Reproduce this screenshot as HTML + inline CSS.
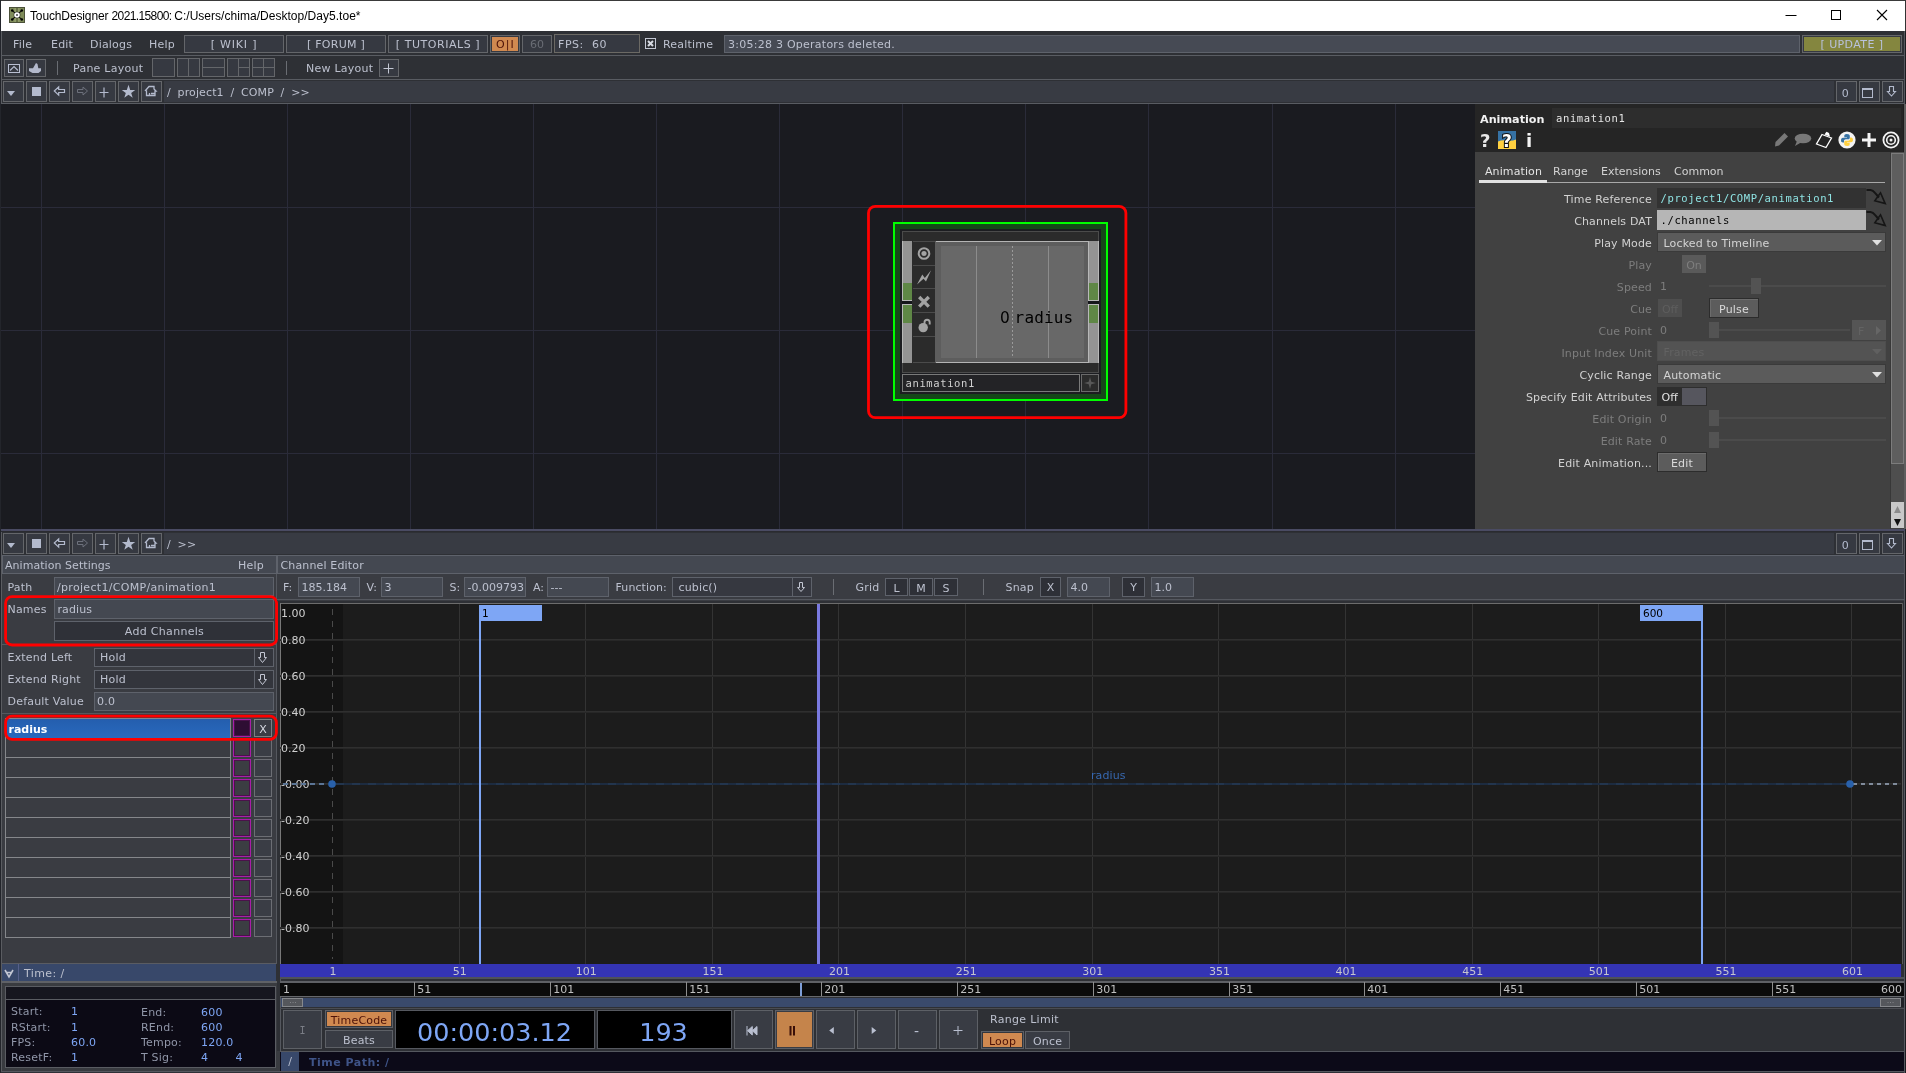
<!DOCTYPE html>
<html><head><meta charset="utf-8"><title>TouchDesigner</title>
<style>
html,body{margin:0;padding:0;background:#2e3035;overflow:hidden;}
#root{will-change:transform;position:relative;width:1906px;height:1073px;overflow:hidden;background:#2e3035;font-family:'DejaVu Sans',sans-serif;}
#root div{position:absolute;}
#root svg{position:absolute;overflow:visible;}
.t{white-space:nowrap;line-height:normal;}
</style></head><body><div id="root">
<div style="left:0px;top:0px;width:1906px;height:31px;background:#ffffff;"></div>
<div style="left:0px;top:0px;width:1906px;height:1px;background:#3a3a3a;"></div>
<div style="left:0px;top:0px;width:1px;height:1073px;background:#23252b;"></div>
<div style="left:1905px;top:0px;width:1px;height:31px;background:#333333;"></div>
<svg style="left:9px;top:7px" width="16" height="16" viewBox="0 0 16 16">
<rect x="0.5" y="0.5" width="15" height="15" fill="#7e8b59" stroke="#4b5139" stroke-width="1"/>
<rect x="5.3" y="1" width="1.8" height="14" fill="#8f9c69"/><rect x="8.9" y="1" width="1.800" height="14" fill="#8f9c69"/>
<rect x="7.4" y="1" width="1.2" height="14" fill="#56613d"/>
<path d="M3.2 3.400 L12.800 12.600 M12.800 3.400 L3.200 12.600" stroke="#0c0d08" stroke-width="1.100"/>
<circle cx="3.200" cy="3.400" r="1.250" fill="#000"/><circle cx="12.800" cy="3.400" r="1.250" fill="#000"/>
<circle cx="3.200" cy="12.600" r="1.250" fill="#000"/><circle cx="12.800" cy="12.600" r="1.250" fill="#000"/>
<circle cx="8" cy="8" r="3.300" fill="#1a1c12"/><circle cx="8" cy="8" r="2.800" fill="#fff"/><rect x="7.200" y="7.200" width="1.600" height="1.600" fill="#2a2a2a"/>
</svg>
<div class="t" style="top:9.14px;font-size:12px;color:#000;font-family:'Liberation Sans', sans-serif;left:30px;"><span style="letter-spacing:-0.13px">TouchDesigner </span><span style="letter-spacing:-0.62px">2021.15800: </span><span style="letter-spacing:0.03px">C:/Users/chima/Desktop/Day5.toe*</span></div>
<svg style="left:1780px;top:5px" width="120" height="22" viewBox="0 0 120 22">
<path d="M5.5 10.5 H16.5" stroke="#000" stroke-width="1" fill="none"/>
<rect x="51.5" y="5.5" width="9" height="9" stroke="#000" stroke-width="1" fill="none"/>
<path d="M97 5 L107 15 M107 5 L97 15" stroke="#000" stroke-width="1.1" fill="none"/>
</svg>
<div style="left:1px;top:31px;width:1905px;height:25px;background:#2e3035;"></div>
<div style="left:1px;top:31px;width:1px;height:73px;background:#5a5c61;"></div>
<div style="left:1px;top:529px;width:1px;height:544px;background:#5a5c61;"></div>
<div style="left:1px;top:55px;width:1905px;height:1px;background:#595c62;"></div>
<div class="t" style="top:37.79px;font-size:11px;color:#bcc0ce;font-family:'DejaVu Sans', sans-serif;left:13px;letter-spacing:0.2px;">File</div>
<div class="t" style="top:37.79px;font-size:11px;color:#bcc0ce;font-family:'DejaVu Sans', sans-serif;left:51px;letter-spacing:0.2px;">Edit</div>
<div class="t" style="top:37.79px;font-size:11px;color:#bcc0ce;font-family:'DejaVu Sans', sans-serif;left:90px;letter-spacing:0.2px;">Dialogs</div>
<div class="t" style="top:37.79px;font-size:11px;color:#bcc0ce;font-family:'DejaVu Sans', sans-serif;left:149px;letter-spacing:0.2px;">Help</div>
<div style="left:184px;top:35px;width:100px;height:18px;background:#363941;border:1px solid #64666a;box-sizing:border-box;"></div>
<div class="t" style="top:37.79px;font-size:11px;color:#bcc0ce;font-family:'DejaVu Sans', sans-serif;left:34.0px;width:400px;text-align:center;letter-spacing:0.8px;">[ WIKI ]</div>
<div style="left:286px;top:35px;width:100px;height:18px;background:#363941;border:1px solid #64666a;box-sizing:border-box;"></div>
<div class="t" style="top:37.79px;font-size:11px;color:#bcc0ce;font-family:'DejaVu Sans', sans-serif;left:136.0px;width:400px;text-align:center;letter-spacing:0.25px;">[ FORUM ]</div>
<div style="left:388px;top:35px;width:100px;height:18px;background:#363941;border:1px solid #64666a;box-sizing:border-box;"></div>
<div class="t" style="top:37.79px;font-size:11px;color:#bcc0ce;font-family:'DejaVu Sans', sans-serif;left:238.0px;width:400px;text-align:center;letter-spacing:0.55px;">[ TUTORIALS ]</div>
<div style="left:490px;top:35px;width:30px;height:18px;background:#363941;border:1px solid #64666a;box-sizing:border-box;"></div>
<div style="left:492px;top:37px;width:26px;height:14px;background:#d08950;"></div>
<div class="t" style="top:37.79px;font-size:11px;color:#4d1208;font-family:'DejaVu Sans', sans-serif;left:305.5px;width:400px;text-align:center;letter-spacing:1.1px;">O|I</div>
<div style="left:522px;top:35px;width:30px;height:18px;background:#363941;border:1px solid #64666a;box-sizing:border-box;"></div>
<div class="t" style="top:37.79px;font-size:11px;color:#6a6d75;font-family:'DejaVu Sans', sans-serif;left:337px;width:400px;text-align:center;">60</div>
<div style="left:554px;top:34px;width:86px;height:19px;background:#363941;border:1px solid #6b6964;box-sizing:border-box;"></div>
<div class="t" style="top:37.79px;font-size:11px;color:#bcc0ce;font-family:'DejaVu Sans', sans-serif;left:558px;letter-spacing:0.55px;">FPS:&nbsp; 60</div>
<div style="left:645px;top:38px;width:11px;height:11px;border:1px solid #c3c7d3;box-sizing:border-box;"></div>
<svg style="left:645px;top:38px" width="11" height="11"><path d="M3 3 L8 8 M8 3 L3 8" stroke="#d8dbe3" stroke-width="2" fill="none"/></svg>
<div class="t" style="top:37.79px;font-size:11px;color:#bcc0ce;font-family:'DejaVu Sans', sans-serif;left:663px;letter-spacing:0.2px;">Realtime</div>
<div style="left:724px;top:35px;width:1076px;height:18px;background:#464a54;border:1px solid #5e626b;box-sizing:border-box;"></div>
<div class="t" style="top:37.79px;font-size:11px;color:#bcc0ce;font-family:'DejaVu Sans', sans-serif;left:728px;letter-spacing:0.25px;">3:05:28 3 Operators deleted.</div>
<div style="left:1802px;top:35px;width:100px;height:18px;background:#363941;border:1px solid #64666a;box-sizing:border-box;"></div>
<div style="left:1804px;top:37px;width:96px;height:14px;background:#84863f;"></div>
<div class="t" style="top:37.79px;font-size:11px;color:#b9c2dc;font-family:'DejaVu Sans', sans-serif;left:1652px;width:400px;text-align:center;letter-spacing:0.4px;">[ UPDATE ]</div>
<div style="left:1px;top:79px;width:1905px;height:1px;background:#595c62;"></div>
<div style="left:4px;top:59px;width:20px;height:18px;background:#363941;border:1px solid #64666a;box-sizing:border-box;"></div>
<div style="left:26px;top:59px;width:20px;height:18px;background:#363941;border:1px solid #64666a;box-sizing:border-box;"></div>
<svg style="left:4px;top:59px" width="20" height="18"><rect x="4.5" y="5.5" width="11" height="8" fill="none" stroke="#b9bfd2"/><path d="M6 11.500 L10 7.500 L14 11.500" fill="none" stroke="#b9bfd2" stroke-width="1.100"/></svg>
<svg style="left:26px;top:59px" width="20" height="18"><path d="M3 9.300 H15 V12 L12.500 14 H6.500 L3 12 Z M7 9.300 L10 4 L11.500 5 L12.300 9.300 Z" fill="#b3b9cc"/></svg>
<div style="left:57px;top:61px;width:1px;height:14px;background:#6a6d73;"></div>
<div class="t" style="top:61.79px;font-size:11px;color:#bcc0ce;font-family:'DejaVu Sans', sans-serif;left:73px;letter-spacing:0.25px;">Pane Layout</div>
<div style="left:152px;top:58px;width:23px;height:19px;background:#363941;border:1px solid #64666a;box-sizing:border-box;"></div>
<div style="left:177px;top:58px;width:23px;height:19px;background:#363941;border:1px solid #64666a;box-sizing:border-box;"></div>
<div style="left:188px;top:58px;width:1px;height:19px;background:#64666a;"></div>
<div style="left:202px;top:58px;width:23px;height:19px;background:#363941;border:1px solid #64666a;box-sizing:border-box;"></div>
<div style="left:202px;top:67px;width:23px;height:1px;background:#64666a;"></div>
<div style="left:227px;top:58px;width:23px;height:19px;background:#363941;border:1px solid #64666a;box-sizing:border-box;"></div>
<div style="left:238px;top:58px;width:1px;height:19px;background:#64666a;"></div>
<div style="left:238px;top:67px;width:12px;height:1px;background:#64666a;"></div>
<div style="left:252px;top:58px;width:23px;height:19px;background:#363941;border:1px solid #64666a;box-sizing:border-box;"></div>
<div style="left:263px;top:58px;width:1px;height:19px;background:#64666a;"></div>
<div style="left:252px;top:67px;width:23px;height:1px;background:#64666a;"></div>
<div style="left:286px;top:61px;width:1px;height:14px;background:#6a6d73;"></div>
<div class="t" style="top:61.79px;font-size:11px;color:#bcc0ce;font-family:'DejaVu Sans', sans-serif;left:306px;letter-spacing:0.25px;">New Layout</div>
<div style="left:379px;top:59px;width:20px;height:18px;background:#363941;border:1px solid #64666a;box-sizing:border-box;"></div>
<svg style="left:379px;top:59px" width="20" height="18"><path d="M4.5 9.5 H14.5 M9.5 4.5 V14.5" stroke="#c3c7d3" fill="none"/></svg>
<div style="left:2px;top:80px;width:1903px;height:23px;background:#2e3035;"></div>
<div style="left:164px;top:81px;width:1670px;height:21px;background:#383b43;"></div>
<div style="left:3px;top:81px;width:21px;height:21px;background:#363941;border:1px solid #64666a;box-sizing:border-box;"></div>
<svg style="left:3px;top:81px" width="21" height="21"><path d="M4 10 H12 L8 15 Z" fill="#b3bacd"/></svg>
<div style="left:26px;top:81px;width:21px;height:21px;background:#363941;border:1px solid #64666a;box-sizing:border-box;"></div>
<svg style="left:26px;top:81px" width="21" height="21"><rect x="6" y="6" width="9" height="9" fill="#b3bacd"/></svg>
<div style="left:49px;top:81px;width:21px;height:21px;background:#363941;border:1px solid #64666a;box-sizing:border-box;"></div>
<svg style="left:49px;top:81px" width="21" height="21"><path d="M5.300 10 L9.700 5.800 V8.500 H15.500 V11.500 H9.700 V14.200 Z" fill="none" stroke="#b3bacd" stroke-width="1.2"/></svg>
<div style="left:72px;top:81px;width:21px;height:21px;background:#363941;border:1px solid #64666a;box-sizing:border-box;"></div>
<svg style="left:72px;top:81px" width="21" height="21"><path d="M15.5 10 L11 6 V8.5 H5.5 V11.5 H11 V14 Z" fill="none" stroke="#6d717c" stroke-width="1"/></svg>
<div style="left:95px;top:81px;width:21px;height:21px;background:#363941;border:1px solid #64666a;box-sizing:border-box;"></div>
<svg style="left:95px;top:81px" width="21" height="21"><path d="M4.500 11.500 H13.500 M9 6.500 V16.500" stroke="#b3bacd" stroke-width="1.2" fill="none"/></svg>
<div style="left:118px;top:81px;width:21px;height:21px;background:#363941;border:1px solid #64666a;box-sizing:border-box;"></div>
<svg style="left:118px;top:81px" width="21" height="21"><path d="M10.500 3.800 L12.200 8.900 H17.200 L13.200 11.900 L14.700 16.800 L10.500 13.800 L6.300 16.800 L7.800 11.900 L3.800 8.900 H8.800 Z" fill="#b3bacd"/></svg>
<div style="left:141px;top:81px;width:21px;height:21px;background:#363941;border:1px solid #64666a;box-sizing:border-box;"></div>
<svg style="left:141px;top:81px" width="21" height="21"><path d="M4.500 9.500 L8 5.500 H13 V8 L15 10 H14 V14.500 H5.500 V10 Z M8.500 14.500 V12 M10 12.500 H14" fill="none" stroke="#b3bacd" stroke-width="1.300"/></svg>
<div class="t" style="top:85.79px;font-size:11px;color:#bcc0ce;font-family:'DejaVu Sans', sans-serif;left:167px;letter-spacing:0.12px;word-spacing:3.1px;">/ project1 / COMP / &gt;&gt;</div>
<div style="left:1834px;top:80px;width:70px;height:23px;background:#2e3035;"></div>
<div style="left:1836px;top:81px;width:21px;height:21px;background:#363941;border:1px solid #64666a;box-sizing:border-box;"></div>
<div style="left:1859px;top:81px;width:21px;height:21px;background:#363941;border:1px solid #64666a;box-sizing:border-box;"></div>
<div style="left:1882px;top:81px;width:21px;height:21px;background:#363941;border:1px solid #64666a;box-sizing:border-box;"></div>
<div class="t" style="top:86.79px;font-size:11px;color:#b3bacd;font-family:'DejaVu Sans', sans-serif;left:1645.2px;width:400px;text-align:center;">0</div>
<svg style="left:1857px;top:81px" width="21" height="21"><rect x="5.5" y="7.5" width="10" height="9" fill="none" stroke="#b3bacd"/><rect x="5" y="7" width="11" height="2" fill="#b3bacd"/></svg>
<svg style="left:1881px;top:81px" width="21" height="21"><path d="M8.500 5.500 H12.500 V10.500 H14.500 L10.500 15 L6.500 10.500 H8.500 Z" fill="none" stroke="#b3bacd" stroke-width="1.1"/></svg>
<div style="left:1px;top:103px;width:1905px;height:1px;background:#595c62;"></div>
<div style="left:1px;top:104px;width:1474px;height:425px;background:#1a1b20;"></div>
<div style="left:41px;top:104px;width:1px;height:425px;background:#2a2b39;"></div>
<div style="left:164px;top:104px;width:1px;height:425px;background:#2a2b39;"></div>
<div style="left:287px;top:104px;width:1px;height:425px;background:#2a2b39;"></div>
<div style="left:410px;top:104px;width:1px;height:425px;background:#2a2b39;"></div>
<div style="left:533px;top:104px;width:1px;height:425px;background:#2a2b39;"></div>
<div style="left:656px;top:104px;width:1px;height:425px;background:#2a2b39;"></div>
<div style="left:779px;top:104px;width:1px;height:425px;background:#2a2b39;"></div>
<div style="left:902px;top:104px;width:1px;height:425px;background:#2a2b39;"></div>
<div style="left:1025px;top:104px;width:1px;height:425px;background:#2a2b39;"></div>
<div style="left:1148px;top:104px;width:1px;height:425px;background:#2a2b39;"></div>
<div style="left:1272px;top:104px;width:1px;height:425px;background:#2a2b39;"></div>
<div style="left:1395px;top:104px;width:1px;height:425px;background:#2a2b39;"></div>
<div style="left:1px;top:207px;width:1474px;height:1px;background:#2a2b39;"></div>
<div style="left:1px;top:330px;width:1474px;height:1px;background:#2a2b39;"></div>
<div style="left:1px;top:453px;width:1474px;height:1px;background:#2a2b39;"></div>
<svg style="left:0px;top:0px" width="1" height="1"><rect x="868.50" y="206.30" width="257.40" height="211.40" rx="6.8" ry="6.8" fill="none" stroke="#ff0000" stroke-width="2.8"/></svg>
<div style="left:893px;top:222px;width:215px;height:179px;background:#154818;border:2px solid #00ff00;box-sizing:border-box;"></div>
<div style="left:900px;top:229px;width:201px;height:165px;background:#1c1d21;"></div>
<div style="left:902px;top:231px;width:197px;height:142px;background:#2b2b2b;"></div>
<div style="left:902px;top:231px;width:197px;height:1px;background:#4b4b4b;"></div>
<div style="left:902px;top:372px;width:197px;height:1px;background:#4b4b4b;"></div>
<div style="left:902px;top:241px;width:10px;height:122px;background:#949494;"></div>
<div style="left:902px;top:241px;width:1px;height:122px;background:#b8b8b8;"></div>
<div style="left:903px;top:283px;width:9px;height:17px;background:#5f8746;"></div>
<div style="left:902px;top:300px;width:10px;height:5px;background:#15161a;"></div>
<div style="left:902px;top:300px;width:10px;height:1px;background:#b8b8b8;"></div>
<div style="left:902px;top:304px;width:10px;height:1px;background:#b8b8b8;"></div>
<div style="left:903px;top:305px;width:9px;height:18px;background:#5f8746;"></div>
<div style="left:1088px;top:241px;width:11px;height:122px;background:#949494;"></div>
<div style="left:1088px;top:241px;width:1px;height:122px;background:#b8b8b8;"></div>
<div style="left:1098px;top:241px;width:1px;height:122px;background:#b8b8b8;"></div>
<div style="left:1089px;top:283px;width:9px;height:17px;background:#5f8746;"></div>
<div style="left:1088px;top:300px;width:11px;height:5px;background:#15161a;"></div>
<div style="left:1088px;top:300px;width:11px;height:1px;background:#b8b8b8;"></div>
<div style="left:1088px;top:304px;width:11px;height:1px;background:#b8b8b8;"></div>
<div style="left:1089px;top:305px;width:9px;height:18px;background:#5f8746;"></div>
<div style="left:913px;top:265px;width:22px;height:1px;background:#4b4b4b;"></div>
<div style="left:913px;top:288px;width:22px;height:1px;background:#4b4b4b;"></div>
<div style="left:913px;top:312px;width:22px;height:1px;background:#4b4b4b;"></div>
<div style="left:913px;top:336px;width:22px;height:1px;background:#4b4b4b;"></div>
<div style="left:913px;top:241px;width:22px;height:1px;background:#4b4b4b;"></div>
<div style="left:913px;top:362px;width:22px;height:1px;background:#4b4b4b;"></div>
<div style="left:902px;top:363px;width:1px;height:10px;background:#4b4b4b;"></div>
<div style="left:1098px;top:363px;width:1px;height:10px;background:#4b4b4b;"></div>
<div style="left:902px;top:231px;width:1px;height:10px;background:#4b4b4b;"></div>
<div style="left:1098px;top:231px;width:1px;height:10px;background:#4b4b4b;"></div>
<svg style="left:913px;top:242px" width="22" height="23"><circle cx="11" cy="11.500" r="5.3" fill="none" stroke="#a3a3a3" stroke-width="2"/><circle cx="11" cy="11.500" r="2.600" fill="#a3a3a3"/></svg>
<svg style="left:913px;top:266px" width="22" height="22"><path d="M4 18.600 L9.300 8.500 L11.800 11.900 L18.100 4.200 L13 15.600 L10.500 12.700 Z" fill="#a3a3a3"/></svg>
<svg style="left:913px;top:289px" width="22" height="23"><path d="M6.200 8 L15.800 17.600 M15.800 8 L6.200 17.600" stroke="#a3a3a3" stroke-width="3.300" fill="none"/></svg>
<svg style="left:913px;top:312px" width="22" height="24"><circle cx="10.200" cy="15.600" r="4.700" fill="#a3a3a3"/><path d="M11.500 12 V10.300 A2.600 2.600 0 0 1 16.700 10.300 V12.500" stroke="#a3a3a3" stroke-width="1.900" fill="none"/></svg>
<div style="left:935px;top:241px;width:153px;height:122px;background:#5d5d5d;"></div>
<div style="left:936px;top:241px;width:152px;height:1px;background:#b4b4b4;"></div>
<div style="left:936px;top:362px;width:152px;height:1px;background:#b4b4b4;"></div>
<div style="left:941px;top:246px;width:143px;height:112px;background:#686868;"></div>
<div style="left:976px;top:246px;width:1px;height:112px;background:#8c8c8c;"></div>
<div style="left:1048px;top:246px;width:1px;height:112px;background:#8c8c8c;"></div>
<div style="left:1012px;top:246px;width:1px;height:112px;background:repeating-linear-gradient(to bottom,#9a9a9a 0 2px,transparent 2px 4px);"></div>
<div class="t" style="top:308.15px;font-size:16px;color:#000;font-family:'DejaVu Sans', sans-serif;left:999.5px;transform:scaleX(0.96);transform-origin:0 0;">0</div>
<div class="t" style="top:308.15px;font-size:16px;color:#000;font-family:'DejaVu Sans Mono', monospace;left:1014.6px;letter-spacing:0.15px;">radius</div>
<div style="left:902px;top:374px;width:178px;height:18px;background:#232326;border:1px solid #7a7a7a;box-sizing:border-box;"></div>
<div class="t" style="top:377.26px;font-size:10.5px;color:#d0d0d0;font-family:'DejaVu Sans Mono', monospace;left:905.5px;letter-spacing:0.62px;">animation1</div>
<div style="left:1081px;top:374px;width:18px;height:18px;background:#2b2b2b;border:1px solid #6a6a6a;box-sizing:border-box;"></div>
<svg style="left:1081px;top:374px" width="18" height="18"><path d="M9 3 L10.300 7.700 L15 9 L10.300 10.300 L9 15 L7.700 10.300 L3 9 L7.700 7.700 Z" fill="#585858"/></svg>
<div style="left:1475px;top:104px;width:429px;height:425px;background:#414141;"></div>
<div style="left:1475px;top:104px;width:429px;height:48px;background:#252525;"></div>
<div style="left:1904px;top:104px;width:2px;height:425px;background:#1a1a1c;"></div>
<div class="t" style="top:112.61px;font-size:11.2px;color:#f2f2f2;font-family:'DejaVu Sans', sans-serif;left:1480px;font-weight:bold;">Animation</div>
<div style="left:1552px;top:108px;width:349px;height:20px;background:#2d2d2d;"></div>
<div class="t" style="top:112.26px;font-size:10.5px;color:#e6e6e6;font-family:'DejaVu Sans Mono', monospace;left:1556px;letter-spacing:0.62px;">animation1</div>
<div class="t" style="top:129.80px;font-size:18px;color:#e8e8e8;font-family:'DejaVu Sans', sans-serif;left:1480px;font-weight:bold;">?</div>
<svg style="left:1498px;top:131px" width="18" height="18" viewBox="0 0 18 18">
<rect width="18" height="18" fill="#3672a4"/><path d="M0 10.500 Q4 8.700 9 9.600 Q14 10.300 18 8.600 V18 H0 Z" fill="#ffd040"/></svg>
<svg style="left:1498px;top:131px" width="18" height="18"><text x="9" y="15.500" text-anchor="middle" font-family="DejaVu Sans, sans-serif" font-weight="bold" font-size="17" fill="#fff" stroke="#111" stroke-width="2" paint-order="stroke">?</text></svg>
<div class="t" style="top:129.80px;font-size:18px;color:#f4f4f4;font-family:'DejaVu Sans', sans-serif;left:1526px;font-weight:bold;">i</div>
<svg style="left:1772px;top:130px" width="20" height="20" viewBox="0 0 20 20">
<path d="M3 16.500 L3.500 12 L12.500 3 L16 6.500 L7 15.500 Z" fill="#787878"/></svg>
<svg style="left:1793px;top:131px" width="20" height="18" viewBox="0 0 20 18">
<ellipse cx="10" cy="7.500" rx="8.300" ry="4.800" fill="#787878"/><path d="M4 10 L2 15 L8 11.500 Z" fill="#787878"/></svg>
<svg style="left:1814px;top:130px" width="22" height="20" viewBox="0 0 22 20">
<path d="M8 4.500 L17.500 8 L12 17.500 L2.500 14 Z" fill="#252525" stroke="#fff" stroke-width="1.300"/>
<path d="M10.500 4.500 L12.500 1.800 L15 3 L16 6.800 Z" fill="#fff"/></svg>
<svg style="left:1838px;top:131px" width="18" height="18" viewBox="0 0 18 18">
<circle cx="9" cy="9" r="8.600" fill="#f3f3f3"/>
<path d="M8.800 3 C6.500 3 6.300 4 6.300 5 V6.300 H9 V6.800 H5 C3.600 6.800 3 8 3 9.300 C3 10.600 3.600 11.600 5 11.600 H6 V10 C6 9 6.800 8.300 7.800 8.300 H10.300 C11.200 8.300 11.800 7.600 11.800 6.800 V5 C11.800 3.800 10.800 3 8.800 3 Z" fill="#3672a4"/>
<path d="M9.200 15 C11.500 15 11.700 14 11.700 13 V11.700 H9 V11.200 H13 C14.400 11.200 15 10 15 8.700 C15 7.400 14.400 6.400 13 6.400 H12 V8 C12 9 11.200 9.700 10.200 9.700 H7.700 C6.800 9.700 6.200 10.400 6.200 11.200 V13 C6.200 14.200 7.200 15 9.200 15 Z" fill="#ffd040"/>
</svg>
<svg style="left:1862px;top:133px" width="14" height="14"><path d="M0 7 H14 M7 0 V14" stroke="#f4f4f4" stroke-width="3" fill="none"/></svg>
<svg style="left:1882px;top:131px" width="18" height="18"><circle cx="9" cy="9" r="7.600" fill="none" stroke="#f4f4f4" stroke-width="1.800"/><circle cx="9" cy="9" r="4.300" fill="none" stroke="#f4f4f4" stroke-width="1.600"/><circle cx="9" cy="9" r="1.500" fill="#f4f4f4"/></svg>
<div class="t" style="top:164.79px;font-size:11px;color:#e4e4e4;font-family:'DejaVu Sans', sans-serif;left:1485px;letter-spacing:0.1px;">Animation</div>
<div class="t" style="top:164.79px;font-size:11px;color:#d2d2d2;font-family:'DejaVu Sans', sans-serif;left:1553px;">Range</div>
<div class="t" style="top:164.79px;font-size:11px;color:#d2d2d2;font-family:'DejaVu Sans', sans-serif;left:1601px;">Extensions</div>
<div class="t" style="top:164.79px;font-size:11px;color:#d2d2d2;font-family:'DejaVu Sans', sans-serif;left:1674px;">Common</div>
<div style="left:1479px;top:182px;width:406px;height:1px;background:#a8a8a8;"></div>
<div style="left:1479px;top:180px;width:68px;height:3px;background:#e2e2e2;"></div>
<div style="left:1891px;top:152px;width:13px;height:350px;background:#4e4e4e;"></div>
<div style="left:1890px;top:152px;width:1px;height:377px;background:#383838;"></div>
<div style="left:1891px;top:153px;width:13px;height:311px;background:#5e5e5e;border:1px solid #7c7c7c;box-sizing:border-box;"></div>
<div style="left:1891px;top:502px;width:13px;height:26px;background:#c8c8c8;"></div>
<svg style="left:1891px;top:502px" width="13" height="26"><path d="M3 11 H10 L6.500 4 Z" fill="#8a8a8a"/><path d="M3 17 H10 L6.500 24 Z" fill="#111"/></svg>
<div class="t" style="top:192.79px;font-size:11px;color:#d2d2d2;font-family:'DejaVu Sans', sans-serif;left:1252px;width:400px;text-align:right;letter-spacing:0.15px;">Time Reference</div>
<div class="t" style="top:214.79px;font-size:11px;color:#d2d2d2;font-family:'DejaVu Sans', sans-serif;left:1252px;width:400px;text-align:right;letter-spacing:0.15px;">Channels DAT</div>
<div class="t" style="top:236.79px;font-size:11px;color:#d2d2d2;font-family:'DejaVu Sans', sans-serif;left:1252px;width:400px;text-align:right;letter-spacing:0.15px;">Play Mode</div>
<div class="t" style="top:258.79px;font-size:11px;color:#7d7d7d;font-family:'DejaVu Sans', sans-serif;left:1252px;width:400px;text-align:right;letter-spacing:0.15px;">Play</div>
<div class="t" style="top:280.79px;font-size:11px;color:#7d7d7d;font-family:'DejaVu Sans', sans-serif;left:1252px;width:400px;text-align:right;letter-spacing:0.15px;">Speed</div>
<div class="t" style="top:302.79px;font-size:11px;color:#7d7d7d;font-family:'DejaVu Sans', sans-serif;left:1252px;width:400px;text-align:right;letter-spacing:0.15px;">Cue</div>
<div class="t" style="top:324.79px;font-size:11px;color:#7d7d7d;font-family:'DejaVu Sans', sans-serif;left:1252px;width:400px;text-align:right;letter-spacing:0.15px;">Cue Point</div>
<div class="t" style="top:346.79px;font-size:11px;color:#7d7d7d;font-family:'DejaVu Sans', sans-serif;left:1252px;width:400px;text-align:right;letter-spacing:0.15px;">Input Index Unit</div>
<div class="t" style="top:368.79px;font-size:11px;color:#d2d2d2;font-family:'DejaVu Sans', sans-serif;left:1252px;width:400px;text-align:right;letter-spacing:0.15px;">Cyclic Range</div>
<div class="t" style="top:390.79px;font-size:11px;color:#d2d2d2;font-family:'DejaVu Sans', sans-serif;left:1252px;width:400px;text-align:right;letter-spacing:0.15px;">Specify Edit Attributes</div>
<div class="t" style="top:412.79px;font-size:11px;color:#7d7d7d;font-family:'DejaVu Sans', sans-serif;left:1252px;width:400px;text-align:right;letter-spacing:0.15px;">Edit Origin</div>
<div class="t" style="top:434.79px;font-size:11px;color:#7d7d7d;font-family:'DejaVu Sans', sans-serif;left:1252px;width:400px;text-align:right;letter-spacing:0.15px;">Edit Rate</div>
<div class="t" style="top:456.79px;font-size:11px;color:#d2d2d2;font-family:'DejaVu Sans', sans-serif;left:1252px;width:400px;text-align:right;letter-spacing:0.15px;">Edit Animation...</div>
<div style="left:1657px;top:188px;width:209px;height:20px;background:#323232;"></div>
<div class="t" style="top:192.26px;font-size:10.5px;color:#8fe3e3;font-family:'DejaVu Sans Mono', monospace;left:1660.5px;letter-spacing:0.62px;">/project1/COMP/animation1</div>
<div style="left:1657px;top:210px;width:209px;height:20px;background:#b6b6b6;"></div>
<div class="t" style="top:214.26px;font-size:10.5px;color:#000;font-family:'DejaVu Sans Mono', monospace;left:1660.5px;letter-spacing:0.62px;">./channels</div>
<svg style="left:1866px;top:188px" width="21" height="20"><path d="M0.500 2 H4.500 Q7 2.300 9 4.800 L13 9.500" fill="none" stroke="#161616" stroke-width="2"/><path d="M14.500 4.800 L19.200 15.600 L8.800 12.800 Z" fill="none" stroke="#161616" stroke-width="1.600"/></svg>
<svg style="left:1866px;top:210px" width="21" height="20"><path d="M0.500 2 H4.500 Q7 2.300 9 4.800 L13 9.500" fill="none" stroke="#161616" stroke-width="2"/><path d="M14.500 4.800 L19.200 15.600 L8.800 12.800 Z" fill="none" stroke="#161616" stroke-width="1.600"/></svg>
<div style="left:1657px;top:232px;width:229px;height:20px;background:#5b5b5b;border:1px solid #3a3a3a;box-sizing:border-box;"></div>
<div class="t" style="top:236.99px;font-size:11px;color:#d4d4d4;font-family:'DejaVu Sans', sans-serif;left:1663.5px;letter-spacing:0.15px;">Locked to Timeline</div>
<svg style="left:1872px;top:240px" width="10" height="6"><path d="M0 0 H10 L5 5.500 Z" fill="#e0e0e0"/></svg>
<div style="left:1682px;top:255px;width:24px;height:18px;background:#5a5a5a;"></div>
<div class="t" style="top:258.79px;font-size:11px;color:#7e7e7e;font-family:'DejaVu Sans', sans-serif;left:1494px;width:400px;text-align:center;">On</div>
<div class="t" style="top:279.79px;font-size:11px;color:#7d7d7d;font-family:'DejaVu Sans', sans-serif;left:1660px;">1</div>
<div style="left:1709px;top:285px;width:177px;height:2px;background:#4b4b4b;"></div>
<div style="left:1751px;top:278px;width:10px;height:16px;background:#535353;"></div>
<div style="left:1658px;top:299px;width:24px;height:18px;background:#4e4e4e;"></div>
<div class="t" style="top:302.79px;font-size:11px;color:#5e5e5e;font-family:'DejaVu Sans', sans-serif;left:1470px;width:400px;text-align:center;">Off</div>
<div style="left:1709px;top:298px;width:50px;height:20px;background:#5c5c5c;border:1px solid #2c2c2c;box-sizing:border-box;box-shadow:inset 1px 1px 0 #6c6c6c;"></div>
<div class="t" style="top:302.99px;font-size:11px;color:#dadada;font-family:'DejaVu Sans', sans-serif;left:1534px;width:400px;text-align:center;letter-spacing:0.2px;">Pulse</div>
<div class="t" style="top:323.79px;font-size:11px;color:#7d7d7d;font-family:'DejaVu Sans', sans-serif;left:1660px;">0</div>
<div style="left:1709px;top:329px;width:141px;height:2px;background:#4b4b4b;"></div>
<div style="left:1709px;top:322px;width:10px;height:16px;background:#535353;"></div>
<div style="left:1852px;top:320px;width:34px;height:20px;background:#555555;"></div>
<div class="t" style="top:324.59px;font-size:11px;color:#636363;font-family:'DejaVu Sans', sans-serif;left:1858px;">F</div>
<svg style="left:1876px;top:326px" width="6" height="10"><path d="M0 0 V9 L5 4.500 Z" fill="#666"/></svg>
<div style="left:1657px;top:341px;width:229px;height:20px;background:#535353;border:1px solid #4e4e4e;box-sizing:border-box;"></div>
<div class="t" style="top:345.99px;font-size:11px;color:#626262;font-family:'DejaVu Sans', sans-serif;left:1663.5px;letter-spacing:0.15px;">Frames</div>
<svg style="left:1872px;top:349px" width="10" height="6"><path d="M0 0 H10 L5 5.500 Z" fill="#606060"/></svg>
<div style="left:1657px;top:364px;width:229px;height:20px;background:#5b5b5b;border:1px solid #3a3a3a;box-sizing:border-box;"></div>
<div class="t" style="top:368.99px;font-size:11px;color:#d4d4d4;font-family:'DejaVu Sans', sans-serif;left:1663.5px;letter-spacing:0.15px;">Automatic</div>
<svg style="left:1872px;top:372px" width="10" height="6"><path d="M0 0 H10 L5 5.500 Z" fill="#e0e0e0"/></svg>
<div style="left:1657px;top:387px;width:50px;height:19px;background:#2e2e2e;"></div>
<div style="left:1682px;top:388px;width:24px;height:17px;background:#56565e;"></div>
<div class="t" style="top:390.79px;font-size:11px;color:#e2e2e2;font-family:'DejaVu Sans', sans-serif;left:1661.5px;">Off</div>
<div class="t" style="top:411.79px;font-size:11px;color:#7d7d7d;font-family:'DejaVu Sans', sans-serif;left:1660px;">0</div>
<div style="left:1709px;top:417px;width:177px;height:2px;background:#4b4b4b;"></div>
<div style="left:1709px;top:410px;width:10px;height:16px;background:#535353;"></div>
<div class="t" style="top:433.79px;font-size:11px;color:#7d7d7d;font-family:'DejaVu Sans', sans-serif;left:1660px;">0</div>
<div style="left:1709px;top:439px;width:177px;height:2px;background:#4b4b4b;"></div>
<div style="left:1709px;top:432px;width:10px;height:16px;background:#535353;"></div>
<div style="left:1657px;top:452px;width:50px;height:20px;background:#5c5c5c;border:1px solid #2c2c2c;box-sizing:border-box;box-shadow:inset 1px 1px 0 #6c6c6c;"></div>
<div class="t" style="top:456.99px;font-size:11px;color:#dadada;font-family:'DejaVu Sans', sans-serif;left:1482px;width:400px;text-align:center;letter-spacing:0.2px;">Edit</div>
<div style="left:1px;top:529px;width:1905px;height:2px;background:#4a4b63;"></div>
<div style="left:1px;top:531px;width:1905px;height:1px;background:#2a2b30;"></div>
<div style="left:2px;top:532px;width:1903px;height:23px;background:#2e3035;"></div>
<div style="left:164px;top:533px;width:1670px;height:21px;background:#383b43;"></div>
<div style="left:3px;top:533px;width:21px;height:21px;background:#363941;border:1px solid #64666a;box-sizing:border-box;"></div>
<svg style="left:3px;top:533px" width="21" height="21"><path d="M4 10 H12 L8 15 Z" fill="#b3bacd"/></svg>
<div style="left:26px;top:533px;width:21px;height:21px;background:#363941;border:1px solid #64666a;box-sizing:border-box;"></div>
<svg style="left:26px;top:533px" width="21" height="21"><rect x="6" y="6" width="9" height="9" fill="#b3bacd"/></svg>
<div style="left:49px;top:533px;width:21px;height:21px;background:#363941;border:1px solid #64666a;box-sizing:border-box;"></div>
<svg style="left:49px;top:533px" width="21" height="21"><path d="M5.300 10 L9.700 5.800 V8.500 H15.500 V11.500 H9.700 V14.200 Z" fill="none" stroke="#b3bacd" stroke-width="1.2"/></svg>
<div style="left:72px;top:533px;width:21px;height:21px;background:#363941;border:1px solid #64666a;box-sizing:border-box;"></div>
<svg style="left:72px;top:533px" width="21" height="21"><path d="M15.5 10 L11 6 V8.5 H5.5 V11.5 H11 V14 Z" fill="none" stroke="#6d717c" stroke-width="1"/></svg>
<div style="left:95px;top:533px;width:21px;height:21px;background:#363941;border:1px solid #64666a;box-sizing:border-box;"></div>
<svg style="left:95px;top:533px" width="21" height="21"><path d="M4.500 11.500 H13.500 M9 6.500 V16.500" stroke="#b3bacd" stroke-width="1.2" fill="none"/></svg>
<div style="left:118px;top:533px;width:21px;height:21px;background:#363941;border:1px solid #64666a;box-sizing:border-box;"></div>
<svg style="left:118px;top:533px" width="21" height="21"><path d="M10.500 3.800 L12.200 8.900 H17.200 L13.200 11.900 L14.700 16.800 L10.500 13.800 L6.300 16.800 L7.800 11.900 L3.800 8.900 H8.800 Z" fill="#b3bacd"/></svg>
<div style="left:141px;top:533px;width:21px;height:21px;background:#363941;border:1px solid #64666a;box-sizing:border-box;"></div>
<svg style="left:141px;top:533px" width="21" height="21"><path d="M4.500 9.500 L8 5.500 H13 V8 L15 10 H14 V14.500 H5.500 V10 Z M8.500 14.500 V12 M10 12.500 H14" fill="none" stroke="#b3bacd" stroke-width="1.300"/></svg>
<div class="t" style="top:537.79px;font-size:11px;color:#bcc0ce;font-family:'DejaVu Sans', sans-serif;left:167px;letter-spacing:0.12px;word-spacing:3.1px;">/ &gt;&gt;</div>
<div style="left:1834px;top:532px;width:70px;height:23px;background:#2e3035;"></div>
<div style="left:1836px;top:533px;width:21px;height:21px;background:#363941;border:1px solid #64666a;box-sizing:border-box;"></div>
<div style="left:1859px;top:533px;width:21px;height:21px;background:#363941;border:1px solid #64666a;box-sizing:border-box;"></div>
<div style="left:1882px;top:533px;width:21px;height:21px;background:#363941;border:1px solid #64666a;box-sizing:border-box;"></div>
<div class="t" style="top:538.79px;font-size:11px;color:#b3bacd;font-family:'DejaVu Sans', sans-serif;left:1645.2px;width:400px;text-align:center;">0</div>
<svg style="left:1857px;top:533px" width="21" height="21"><rect x="5.5" y="7.5" width="10" height="9" fill="none" stroke="#b3bacd"/><rect x="5" y="7" width="11" height="2" fill="#b3bacd"/></svg>
<svg style="left:1881px;top:533px" width="21" height="21"><path d="M8.500 5.500 H12.500 V10.500 H14.500 L10.500 15 L6.500 10.500 H8.500 Z" fill="none" stroke="#b3bacd" stroke-width="1.1"/></svg>
<div style="left:1px;top:555px;width:1905px;height:1px;background:#595c62;"></div>
<div style="left:2px;top:556px;width:275px;height:408px;background:#3a3c42;"></div>
<div style="left:2px;top:555px;width:275px;height:19px;background:#444851;border:1px solid #5e626b;box-sizing:border-box;"></div>
<div class="t" style="top:558.79px;font-size:11px;color:#bcc0ce;font-family:'DejaVu Sans', sans-serif;left:5px;letter-spacing:0.05px;">Animation Settings</div>
<div class="t" style="top:558.79px;font-size:11px;color:#bcc0ce;font-family:'DejaVu Sans', sans-serif;left:238px;letter-spacing:0.2px;">Help</div>
<div style="left:276px;top:574px;width:1px;height:390px;background:#55585f;"></div>
<div class="t" style="top:580.79px;font-size:11px;color:#bcc0ce;font-family:'DejaVu Sans', sans-serif;left:7.5px;letter-spacing:0.2px;">Path</div>
<div style="left:54px;top:577px;width:220px;height:19px;background:#444851;border:1px solid #5e626b;box-sizing:border-box;"></div>
<div class="t" style="top:580.79px;font-size:11px;color:#bcc0ce;font-family:'DejaVu Sans', sans-serif;left:57px;letter-spacing:0.32px;">/project1/COMP/animation1</div>
<div class="t" style="top:602.79px;font-size:11px;color:#bcc0ce;font-family:'DejaVu Sans', sans-serif;left:7.5px;letter-spacing:0.2px;">Names</div>
<div style="left:54px;top:599px;width:220px;height:20px;background:#444851;border:1px solid #5e626b;box-sizing:border-box;"></div>
<div class="t" style="top:602.79px;font-size:11px;color:#bcc0ce;font-family:'DejaVu Sans', sans-serif;left:57.5px;letter-spacing:0.1px;">radius</div>
<div style="left:54px;top:621px;width:220px;height:20px;background:#2f3138;border:1px solid #5e626b;box-sizing:border-box;"></div>
<div class="t" style="top:624.79px;font-size:11px;color:#bcc0ce;font-family:'DejaVu Sans', sans-serif;left:-35.5px;width:400px;text-align:center;letter-spacing:0.3px;">Add Channels</div>
<div style="left:2px;top:644px;width:275px;height:1px;background:#55585f;"></div>
<div class="t" style="top:650.79px;font-size:11px;color:#bcc0ce;font-family:'DejaVu Sans', sans-serif;left:7.5px;letter-spacing:0.2px;">Extend Left</div>
<div style="left:94px;top:648px;width:180px;height:19px;background:#33353c;border:1px solid #5e626b;box-sizing:border-box;"></div>
<div style="left:254px;top:648px;width:1px;height:19px;background:#5e626b;"></div>
<div class="t" style="top:650.79px;font-size:11px;color:#bcc0ce;font-family:'DejaVu Sans', sans-serif;left:100px;letter-spacing:0.2px;">Hold</div>
<div class="t" style="top:672.79px;font-size:11px;color:#bcc0ce;font-family:'DejaVu Sans', sans-serif;left:7.5px;letter-spacing:0.2px;">Extend Right</div>
<div style="left:94px;top:670px;width:180px;height:19px;background:#33353c;border:1px solid #5e626b;box-sizing:border-box;"></div>
<div style="left:254px;top:670px;width:1px;height:19px;background:#5e626b;"></div>
<div class="t" style="top:672.79px;font-size:11px;color:#bcc0ce;font-family:'DejaVu Sans', sans-serif;left:100px;letter-spacing:0.2px;">Hold</div>
<svg style="left:253px;top:648px" width="19" height="19"><path d="M7.500 4.500 H11.500 V9.500 H13.500 L9.500 14.500 L5.500 9.500 H7.500 Z" fill="none" stroke="#c3c7d3" stroke-width="1"/></svg>
<svg style="left:253px;top:670px" width="19" height="19"><path d="M7.500 4.500 H11.500 V9.500 H13.500 L9.500 14.500 L5.500 9.500 H7.500 Z" fill="none" stroke="#c3c7d3" stroke-width="1"/></svg>
<div class="t" style="top:694.79px;font-size:11px;color:#bcc0ce;font-family:'DejaVu Sans', sans-serif;left:7.5px;letter-spacing:0.2px;">Default Value</div>
<div style="left:94px;top:692px;width:180px;height:19px;background:#444851;border:1px solid #5e626b;box-sizing:border-box;"></div>
<div class="t" style="top:694.79px;font-size:11px;color:#bcc0ce;font-family:'DejaVu Sans', sans-serif;left:97px;letter-spacing:0.2px;">0.0</div>
<div style="left:2px;top:713px;width:275px;height:1px;background:#55585f;"></div>
<div style="left:5px;top:718px;width:226px;height:220px;border:1px solid #85878b;box-sizing:border-box;"></div>
<div style="left:5px;top:757px;width:226px;height:1px;background:#85878b;"></div>
<div style="left:5px;top:777px;width:226px;height:1px;background:#85878b;"></div>
<div style="left:5px;top:797px;width:226px;height:1px;background:#85878b;"></div>
<div style="left:5px;top:817px;width:226px;height:1px;background:#85878b;"></div>
<div style="left:5px;top:837px;width:226px;height:1px;background:#85878b;"></div>
<div style="left:5px;top:857px;width:226px;height:1px;background:#85878b;"></div>
<div style="left:5px;top:877px;width:226px;height:1px;background:#85878b;"></div>
<div style="left:5px;top:897px;width:226px;height:1px;background:#85878b;"></div>
<div style="left:5px;top:917px;width:226px;height:1px;background:#85878b;"></div>
<div style="left:5px;top:937px;width:226px;height:1px;background:#85878b;"></div>
<div style="left:5px;top:737px;width:226px;height:1px;background:#85878b;"></div>
<div style="left:6px;top:719px;width:224px;height:19px;background:linear-gradient(#245eae,#2969bd);"></div>
<div class="t" style="top:722.79px;font-size:11px;color:#ffffff;font-family:'DejaVu Sans', sans-serif;left:8.5px;font-weight:bold;">radius</div>
<div style="left:233px;top:719px;width:18px;height:18px;background:#2e0e33;border:1px solid #a81ea8;box-sizing:border-box;box-shadow:inset 0 0 0 1px #4a124a;"></div>
<div style="left:254px;top:719px;width:18px;height:18px;background:#3a3d45;border:1px solid #7c7e83;box-sizing:border-box;"></div>
<div style="left:233px;top:739px;width:18px;height:18px;background:#3b3d42;border:1px solid #a81ea8;box-sizing:border-box;box-shadow:inset 0 0 0 1px #4a124a;"></div>
<div style="left:254px;top:739px;width:18px;height:18px;background:#3a3d45;border:1px solid #6c6e74;box-sizing:border-box;"></div>
<div style="left:233px;top:759px;width:18px;height:18px;background:#3b3d42;border:1px solid #a81ea8;box-sizing:border-box;box-shadow:inset 0 0 0 1px #4a124a;"></div>
<div style="left:254px;top:759px;width:18px;height:18px;background:#3a3d45;border:1px solid #6c6e74;box-sizing:border-box;"></div>
<div style="left:233px;top:779px;width:18px;height:18px;background:#3b3d42;border:1px solid #a81ea8;box-sizing:border-box;box-shadow:inset 0 0 0 1px #4a124a;"></div>
<div style="left:254px;top:779px;width:18px;height:18px;background:#3a3d45;border:1px solid #6c6e74;box-sizing:border-box;"></div>
<div style="left:233px;top:799px;width:18px;height:18px;background:#3b3d42;border:1px solid #a81ea8;box-sizing:border-box;box-shadow:inset 0 0 0 1px #4a124a;"></div>
<div style="left:254px;top:799px;width:18px;height:18px;background:#3a3d45;border:1px solid #6c6e74;box-sizing:border-box;"></div>
<div style="left:233px;top:819px;width:18px;height:18px;background:#3b3d42;border:1px solid #a81ea8;box-sizing:border-box;box-shadow:inset 0 0 0 1px #4a124a;"></div>
<div style="left:254px;top:819px;width:18px;height:18px;background:#3a3d45;border:1px solid #6c6e74;box-sizing:border-box;"></div>
<div style="left:233px;top:839px;width:18px;height:18px;background:#3b3d42;border:1px solid #a81ea8;box-sizing:border-box;box-shadow:inset 0 0 0 1px #4a124a;"></div>
<div style="left:254px;top:839px;width:18px;height:18px;background:#3a3d45;border:1px solid #6c6e74;box-sizing:border-box;"></div>
<div style="left:233px;top:859px;width:18px;height:18px;background:#3b3d42;border:1px solid #a81ea8;box-sizing:border-box;box-shadow:inset 0 0 0 1px #4a124a;"></div>
<div style="left:254px;top:859px;width:18px;height:18px;background:#3a3d45;border:1px solid #6c6e74;box-sizing:border-box;"></div>
<div style="left:233px;top:879px;width:18px;height:18px;background:#3b3d42;border:1px solid #a81ea8;box-sizing:border-box;box-shadow:inset 0 0 0 1px #4a124a;"></div>
<div style="left:254px;top:879px;width:18px;height:18px;background:#3a3d45;border:1px solid #6c6e74;box-sizing:border-box;"></div>
<div style="left:233px;top:899px;width:18px;height:18px;background:#3b3d42;border:1px solid #a81ea8;box-sizing:border-box;box-shadow:inset 0 0 0 1px #4a124a;"></div>
<div style="left:254px;top:899px;width:18px;height:18px;background:#3a3d45;border:1px solid #6c6e74;box-sizing:border-box;"></div>
<div style="left:233px;top:919px;width:18px;height:18px;background:#3b3d42;border:1px solid #a81ea8;box-sizing:border-box;box-shadow:inset 0 0 0 1px #4a124a;"></div>
<div style="left:254px;top:919px;width:18px;height:18px;background:#3a3d45;border:1px solid #6c6e74;box-sizing:border-box;"></div>
<div class="t" style="top:723.09px;font-size:11px;color:#d5d8e0;font-family:'DejaVu Sans', sans-serif;left:63px;width:400px;text-align:center;">X</div>
<svg style="left:0px;top:0px" width="1" height="1"><rect x="5.60" y="596.70" width="271.00" height="48.30" rx="6.5" ry="6.5" fill="none" stroke="#ff0000" stroke-width="2.8"/></svg>
<svg style="left:0px;top:0px" width="1" height="1"><rect x="5.60" y="716.20" width="270.80" height="23.10" rx="6.5" ry="6.5" fill="none" stroke="#ff0000" stroke-width="2.8"/></svg>
<div style="left:2px;top:963px;width:274px;height:1px;background:#5a5c62;"></div>
<div style="left:2px;top:964px;width:274px;height:17px;background:#38486a;"></div>
<div style="left:18px;top:964px;width:1px;height:17px;background:#55608a;"></div>
<svg style="left:3px;top:966px" width="14" height="14"><path d="M2 4 L6 11 L10 4 M4 6.500 L8 6.500" stroke="#c3c7d3" stroke-width="1.600" fill="none"/></svg>
<div class="t" style="top:967.19px;font-size:11px;color:#bcc0ce;font-family:'DejaVu Sans', sans-serif;left:24px;letter-spacing:0.4px;">Time: /</div>
<div style="left:2px;top:983px;width:278px;height:88px;background:#393b40;"></div>
<div style="left:1px;top:981px;width:280px;height:2px;background:#5f6166;"></div>
<div style="left:5px;top:986px;width:271px;height:82px;background:#0c0a15;border:1px solid #5a5c62;box-sizing:border-box;"></div>
<div style="left:6px;top:987px;width:269px;height:12px;background:#16161f;"></div>
<div style="left:6px;top:999px;width:269px;height:1px;background:#5a5c62;"></div>
<div class="t" style="top:1004.79px;font-size:11px;color:#9096a8;font-family:'DejaVu Sans', sans-serif;left:11px;letter-spacing:0.2px;">Start:</div>
<div class="t" style="top:1004.79px;font-size:11px;color:#7ea6f5;font-family:'DejaVu Sans', sans-serif;left:71px;letter-spacing:0.2px;">1</div>
<div class="t" style="top:1005.79px;font-size:11px;color:#9096a8;font-family:'DejaVu Sans', sans-serif;left:141px;letter-spacing:0.2px;">End:</div>
<div class="t" style="top:1005.79px;font-size:11px;color:#7ea6f5;font-family:'DejaVu Sans', sans-serif;left:201px;letter-spacing:0.2px;">600</div>
<div class="t" style="top:1020.99px;font-size:11px;color:#9096a8;font-family:'DejaVu Sans', sans-serif;left:11px;letter-spacing:0.2px;">RStart:</div>
<div class="t" style="top:1020.99px;font-size:11px;color:#7ea6f5;font-family:'DejaVu Sans', sans-serif;left:71px;letter-spacing:0.2px;">1</div>
<div class="t" style="top:1020.99px;font-size:11px;color:#9096a8;font-family:'DejaVu Sans', sans-serif;left:141px;letter-spacing:0.2px;">REnd:</div>
<div class="t" style="top:1020.99px;font-size:11px;color:#7ea6f5;font-family:'DejaVu Sans', sans-serif;left:201px;letter-spacing:0.2px;">600</div>
<div class="t" style="top:1035.79px;font-size:11px;color:#9096a8;font-family:'DejaVu Sans', sans-serif;left:11px;letter-spacing:0.2px;">FPS:</div>
<div class="t" style="top:1035.79px;font-size:11px;color:#7ea6f5;font-family:'DejaVu Sans', sans-serif;left:71px;letter-spacing:0.2px;">60.0</div>
<div class="t" style="top:1035.79px;font-size:11px;color:#9096a8;font-family:'DejaVu Sans', sans-serif;left:141px;letter-spacing:0.2px;">Tempo:</div>
<div class="t" style="top:1035.79px;font-size:11px;color:#7ea6f5;font-family:'DejaVu Sans', sans-serif;left:201px;letter-spacing:0.2px;">120.0</div>
<div class="t" style="top:1050.79px;font-size:11px;color:#9096a8;font-family:'DejaVu Sans', sans-serif;left:11px;letter-spacing:0.2px;">ResetF:</div>
<div class="t" style="top:1050.79px;font-size:11px;color:#7ea6f5;font-family:'DejaVu Sans', sans-serif;left:71px;letter-spacing:0.2px;">1</div>
<div class="t" style="top:1050.79px;font-size:11px;color:#9096a8;font-family:'DejaVu Sans', sans-serif;left:141px;letter-spacing:0.2px;">T Sig:</div>
<div class="t" style="top:1050.79px;font-size:11px;color:#7ea6f5;font-family:'DejaVu Sans', sans-serif;left:201px;letter-spacing:0.2px;">4</div>
<div class="t" style="top:1050.79px;font-size:11px;color:#7ea6f5;font-family:'DejaVu Sans', sans-serif;left:235.5px;">4</div>
<div style="left:277px;top:555px;width:1628px;height:19px;background:#444851;border:1px solid #5e626b;box-sizing:border-box;"></div>
<div class="t" style="top:558.79px;font-size:11px;color:#bcc0ce;font-family:'DejaVu Sans', sans-serif;left:280.5px;letter-spacing:0.15px;">Channel Editor</div>
<div style="left:277px;top:574px;width:1627px;height:27px;background:#3a3c42;"></div>
<div style="left:277px;top:599px;width:1627px;height:1px;background:#55585f;"></div>
<div class="t" style="top:580.79px;font-size:11px;color:#bcc0ce;font-family:'DejaVu Sans', sans-serif;left:283px;">F:</div>
<div style="left:298px;top:577px;width:62px;height:20px;background:#444851;border:1px solid #5e626b;box-sizing:border-box;"></div>
<div class="t" style="top:580.79px;font-size:11px;color:#bcc0ce;font-family:'DejaVu Sans', sans-serif;left:301.5px;">185.184</div>
<div class="t" style="top:580.79px;font-size:11px;color:#bcc0ce;font-family:'DejaVu Sans', sans-serif;left:366.5px;">V:</div>
<div style="left:381px;top:577px;width:62px;height:20px;background:#444851;border:1px solid #5e626b;box-sizing:border-box;"></div>
<div class="t" style="top:580.79px;font-size:11px;color:#bcc0ce;font-family:'DejaVu Sans', sans-serif;left:384.5px;">3</div>
<div class="t" style="top:580.79px;font-size:11px;color:#bcc0ce;font-family:'DejaVu Sans', sans-serif;left:449.5px;">S:</div>
<div style="left:464px;top:577px;width:62px;height:20px;background:#444851;border:1px solid #5e626b;box-sizing:border-box;"></div>
<div class="t" style="top:580.79px;font-size:11px;color:#bcc0ce;font-family:'DejaVu Sans', sans-serif;left:467.5px;">-0.009793</div>
<div class="t" style="top:580.79px;font-size:11px;color:#bcc0ce;font-family:'DejaVu Sans', sans-serif;left:533px;">A:</div>
<div style="left:547px;top:577px;width:62px;height:20px;background:#444851;border:1px solid #5e626b;box-sizing:border-box;"></div>
<div class="t" style="top:580.79px;font-size:11px;color:#bcc0ce;font-family:'DejaVu Sans', sans-serif;left:550.5px;">---</div>
<div class="t" style="top:580.79px;font-size:11px;color:#bcc0ce;font-family:'DejaVu Sans', sans-serif;left:615.5px;letter-spacing:0.1px;">Function:</div>
<div style="left:672px;top:577px;width:140px;height:20px;background:#363840;border:1px solid #5e626b;box-sizing:border-box;"></div>
<div style="left:792px;top:577px;width:1px;height:20px;background:#5e626b;"></div>
<div class="t" style="top:580.79px;font-size:11px;color:#bcc0ce;font-family:'DejaVu Sans', sans-serif;left:678.5px;letter-spacing:0.15px;">cubic()</div>
<svg style="left:792px;top:577px" width="19" height="20"><path d="M7.500 5.500 H10.500 V10.500 H12.500 L9 14.500 L5.500 10.500 H7.500 Z" fill="none" stroke="#c3c7d3" stroke-width="1"/></svg>
<div style="left:833px;top:579px;width:1px;height:16px;background:#6a6d73;"></div>
<div class="t" style="top:580.79px;font-size:11px;color:#bcc0ce;font-family:'DejaVu Sans', sans-serif;left:855.5px;letter-spacing:0.2px;">Grid</div>
<div style="left:885px;top:578px;width:23px;height:18px;background:#2e3037;border:1px solid #5e626b;box-sizing:border-box;"></div>
<div class="t" style="top:581.79px;font-size:11px;color:#bcc0ce;font-family:'DejaVu Sans', sans-serif;left:696.5px;width:400px;text-align:center;">L</div>
<div style="left:909px;top:578px;width:24px;height:18px;background:#2e3037;border:1px solid #5e626b;box-sizing:border-box;"></div>
<div class="t" style="top:581.79px;font-size:11px;color:#bcc0ce;font-family:'DejaVu Sans', sans-serif;left:721.0px;width:400px;text-align:center;">M</div>
<div style="left:934px;top:578px;width:24px;height:18px;background:#2e3037;border:1px solid #5e626b;box-sizing:border-box;"></div>
<div class="t" style="top:581.79px;font-size:11px;color:#bcc0ce;font-family:'DejaVu Sans', sans-serif;left:746.0px;width:400px;text-align:center;">S</div>
<div style="left:983px;top:579px;width:1px;height:16px;background:#6a6d73;"></div>
<div class="t" style="top:580.79px;font-size:11px;color:#bcc0ce;font-family:'DejaVu Sans', sans-serif;left:1005.5px;letter-spacing:0.2px;">Snap</div>
<div style="left:1040px;top:577px;width:21px;height:20px;background:#2e3037;border:1px solid #5e626b;box-sizing:border-box;"></div>
<div class="t" style="top:580.79px;font-size:11px;color:#bcc0ce;font-family:'DejaVu Sans', sans-serif;left:850.5px;width:400px;text-align:center;">X</div>
<div style="left:1067px;top:577px;width:43px;height:20px;background:#444851;border:1px solid #5e626b;box-sizing:border-box;"></div>
<div class="t" style="top:580.79px;font-size:11px;color:#bcc0ce;font-family:'DejaVu Sans', sans-serif;left:1070.5px;">4.0</div>
<div style="left:1122px;top:577px;width:23px;height:20px;background:#2e3037;border:1px solid #5e626b;box-sizing:border-box;"></div>
<div class="t" style="top:580.79px;font-size:11px;color:#bcc0ce;font-family:'DejaVu Sans', sans-serif;left:933.5px;width:400px;text-align:center;">Y</div>
<div style="left:1151px;top:577px;width:43px;height:20px;background:#444851;border:1px solid #5e626b;box-sizing:border-box;"></div>
<div class="t" style="top:580.79px;font-size:11px;color:#bcc0ce;font-family:'DejaVu Sans', sans-serif;left:1154.5px;">1.0</div>
<div style="left:280px;top:603px;width:1622px;height:361px;background:#1c1c1c;"></div>
<div style="left:280px;top:604px;width:63px;height:360px;background:#141414;"></div>
<div style="left:280px;top:603px;width:1623px;height:1px;background:#6c6c6c;"></div>
<div style="left:280px;top:603px;width:1px;height:361px;background:#787878;"></div>
<div style="left:1902px;top:603px;width:1px;height:361px;background:#5a5a5a;"></div>
<div style="left:459px;top:604px;width:1px;height:360px;background:#333333;"></div>
<div style="left:585px;top:604px;width:1px;height:360px;background:#333333;"></div>
<div style="left:712px;top:604px;width:1px;height:360px;background:#333333;"></div>
<div style="left:838px;top:604px;width:1px;height:360px;background:#333333;"></div>
<div style="left:965px;top:604px;width:1px;height:360px;background:#333333;"></div>
<div style="left:1092px;top:604px;width:1px;height:360px;background:#333333;"></div>
<div style="left:1218px;top:604px;width:1px;height:360px;background:#333333;"></div>
<div style="left:1345px;top:604px;width:1px;height:360px;background:#333333;"></div>
<div style="left:1472px;top:604px;width:1px;height:360px;background:#333333;"></div>
<div style="left:1598px;top:604px;width:1px;height:360px;background:#333333;"></div>
<div style="left:1725px;top:604px;width:1px;height:360px;background:#333333;"></div>
<div style="left:1851px;top:604px;width:1px;height:360px;background:#333333;"></div>
<div style="left:280px;top:639px;width:1621px;height:1px;background:#2f2f2f;"></div>
<div style="left:280px;top:640px;width:1621px;height:1px;background:#272727;"></div>
<div style="left:280px;top:675px;width:1621px;height:1px;background:#2f2f2f;"></div>
<div style="left:280px;top:676px;width:1621px;height:1px;background:#272727;"></div>
<div style="left:280px;top:711px;width:1621px;height:1px;background:#2f2f2f;"></div>
<div style="left:280px;top:712px;width:1621px;height:1px;background:#272727;"></div>
<div style="left:280px;top:747px;width:1621px;height:1px;background:#2f2f2f;"></div>
<div style="left:280px;top:748px;width:1621px;height:1px;background:#272727;"></div>
<div style="left:280px;top:783px;width:1621px;height:1px;background:#2f2f2f;"></div>
<div style="left:280px;top:784px;width:1621px;height:1px;background:#272727;"></div>
<div style="left:280px;top:819px;width:1621px;height:1px;background:#2f2f2f;"></div>
<div style="left:280px;top:820px;width:1621px;height:1px;background:#272727;"></div>
<div style="left:280px;top:855px;width:1621px;height:1px;background:#2f2f2f;"></div>
<div style="left:280px;top:856px;width:1621px;height:1px;background:#272727;"></div>
<div style="left:280px;top:891px;width:1621px;height:1px;background:#2f2f2f;"></div>
<div style="left:280px;top:892px;width:1621px;height:1px;background:#272727;"></div>
<div style="left:280px;top:927px;width:1621px;height:1px;background:#2f2f2f;"></div>
<div style="left:280px;top:928px;width:1621px;height:1px;background:#272727;"></div>
<div style="left:332px;top:609px;width:1px;height:350px;background:repeating-linear-gradient(to bottom,#4a4a4a 0 6px,transparent 6px 12px);"></div>
<div class="t" style="top:607.09px;font-size:11px;color:#cfcfcf;font-family:'DejaVu Sans', sans-serif;left:281px;">1.00</div>
<div class="t" style="top:633.69px;font-size:11px;color:#cfcfcf;font-family:'DejaVu Sans', sans-serif;left:281px;">0.80</div>
<div class="t" style="top:669.69px;font-size:11px;color:#cfcfcf;font-family:'DejaVu Sans', sans-serif;left:281px;">0.60</div>
<div class="t" style="top:705.69px;font-size:11px;color:#cfcfcf;font-family:'DejaVu Sans', sans-serif;left:281px;">0.40</div>
<div class="t" style="top:741.69px;font-size:11px;color:#cfcfcf;font-family:'DejaVu Sans', sans-serif;left:281px;">0.20</div>
<div class="t" style="top:777.69px;font-size:11px;color:#cfcfcf;font-family:'DejaVu Sans', sans-serif;left:281px;">-0.00</div>
<div class="t" style="top:813.69px;font-size:11px;color:#cfcfcf;font-family:'DejaVu Sans', sans-serif;left:281px;">-0.20</div>
<div class="t" style="top:849.69px;font-size:11px;color:#cfcfcf;font-family:'DejaVu Sans', sans-serif;left:281px;">-0.40</div>
<div class="t" style="top:885.69px;font-size:11px;color:#cfcfcf;font-family:'DejaVu Sans', sans-serif;left:281px;">-0.60</div>
<div class="t" style="top:921.69px;font-size:11px;color:#cfcfcf;font-family:'DejaVu Sans', sans-serif;left:281px;">-0.80</div>
<div style="left:336px;top:783px;width:1514px;height:2px;background:#1c2b40;"></div>
<div style="left:336px;top:783px;width:1514px;height:2px;background:repeating-linear-gradient(to right,#22354e 0 8px,transparent 8px 16px);"></div>
<div style="left:283px;top:783px;width:45px;height:2px;background:repeating-linear-gradient(to right,#5b7596 0 5px,transparent 5px 9px);"></div>
<div style="left:1853px;top:783px;width:46px;height:2px;background:repeating-linear-gradient(to right,#808b9b 0 4px,transparent 4px 8px);"></div>
<svg style="left:327px;top:779px" width="10" height="10"><circle cx="5" cy="5" r="3.800" fill="#2961ab"/></svg>
<svg style="left:1845px;top:779px" width="10" height="10"><circle cx="5" cy="5" r="3.800" fill="#2961ab"/></svg>
<div class="t" style="top:769.39px;font-size:11px;color:#3768b0;font-family:'DejaVu Sans', sans-serif;left:1091px;letter-spacing:0.1px;">radius</div>
<div style="left:479px;top:605px;width:63px;height:16px;background:#7ea6f5;"></div>
<div style="left:479px;top:605px;width:2px;height:359px;background:#7ea6f5;"></div>
<div class="t" style="top:607.26px;font-size:10.5px;color:#000;font-family:'DejaVu Sans', sans-serif;left:482px;">1</div>
<div style="left:1640px;top:605px;width:63px;height:16px;background:#7ea6f5;"></div>
<div style="left:1701px;top:605px;width:2px;height:359px;background:#7ea6f5;"></div>
<div class="t" style="top:607.26px;font-size:10.5px;color:#000;font-family:'DejaVu Sans', sans-serif;left:1643px;">600</div>
<div style="left:817px;top:604px;width:3px;height:360px;background:#7a7ae0;"></div>
<div style="left:280px;top:964px;width:1621px;height:13px;background:#3434b4;"></div>
<div class="t" style="top:964.79px;font-size:11px;color:#c6c6cf;font-family:'DejaVu Sans', sans-serif;left:133.09999999999997px;width:400px;text-align:center;">1</div>
<div class="t" style="top:964.79px;font-size:11px;color:#c6c6cf;font-family:'DejaVu Sans', sans-serif;left:259.72499999999997px;width:400px;text-align:center;">51</div>
<div class="t" style="top:964.79px;font-size:11px;color:#c6c6cf;font-family:'DejaVu Sans', sans-serif;left:386.35px;width:400px;text-align:center;">101</div>
<div class="t" style="top:964.79px;font-size:11px;color:#c6c6cf;font-family:'DejaVu Sans', sans-serif;left:512.9750000000001px;width:400px;text-align:center;">151</div>
<div class="t" style="top:964.79px;font-size:11px;color:#c6c6cf;font-family:'DejaVu Sans', sans-serif;left:639.6000000000001px;width:400px;text-align:center;">201</div>
<div class="t" style="top:964.79px;font-size:11px;color:#c6c6cf;font-family:'DejaVu Sans', sans-serif;left:766.225px;width:400px;text-align:center;">251</div>
<div class="t" style="top:964.79px;font-size:11px;color:#c6c6cf;font-family:'DejaVu Sans', sans-serif;left:892.8500000000001px;width:400px;text-align:center;">301</div>
<div class="t" style="top:964.79px;font-size:11px;color:#c6c6cf;font-family:'DejaVu Sans', sans-serif;left:1019.4750000000001px;width:400px;text-align:center;">351</div>
<div class="t" style="top:964.79px;font-size:11px;color:#c6c6cf;font-family:'DejaVu Sans', sans-serif;left:1146.1000000000001px;width:400px;text-align:center;">401</div>
<div class="t" style="top:964.79px;font-size:11px;color:#c6c6cf;font-family:'DejaVu Sans', sans-serif;left:1272.7250000000001px;width:400px;text-align:center;">451</div>
<div class="t" style="top:964.79px;font-size:11px;color:#c6c6cf;font-family:'DejaVu Sans', sans-serif;left:1399.3500000000001px;width:400px;text-align:center;">501</div>
<div class="t" style="top:964.79px;font-size:11px;color:#c6c6cf;font-family:'DejaVu Sans', sans-serif;left:1525.9750000000001px;width:400px;text-align:center;">551</div>
<div class="t" style="top:964.79px;font-size:11px;color:#c6c6cf;font-family:'DejaVu Sans', sans-serif;left:1652.6000000000001px;width:400px;text-align:center;">601</div>
<div style="left:280px;top:977px;width:1624px;height:2px;background:#4e5158;"></div>
<div style="left:277px;top:979px;width:1627px;height:72px;background:#2e3035;"></div>
<div style="left:280px;top:979px;width:1px;height:93px;background:#55585f;"></div>
<div style="left:280px;top:983px;width:1624px;height:13px;background:#0b0b0b;"></div>
<div style="left:280px;top:981px;width:1624px;height:2px;background:#5f6166;"></div>
<div style="left:280px;top:996px;width:1624px;height:1px;background:#66686c;"></div>
<div style="left:414px;top:982px;width:1px;height:14px;background:#8e8e8e;"></div>
<div class="t" style="top:982.79px;font-size:11px;color:#c0c0c0;font-family:'DejaVu Sans', sans-serif;left:417.3px;">51</div>
<div style="left:550px;top:982px;width:1px;height:14px;background:#8e8e8e;"></div>
<div class="t" style="top:982.79px;font-size:11px;color:#c0c0c0;font-family:'DejaVu Sans', sans-serif;left:553.3px;">101</div>
<div style="left:686px;top:982px;width:1px;height:14px;background:#8e8e8e;"></div>
<div class="t" style="top:982.79px;font-size:11px;color:#c0c0c0;font-family:'DejaVu Sans', sans-serif;left:689.3px;">151</div>
<div style="left:821px;top:982px;width:1px;height:14px;background:#8e8e8e;"></div>
<div class="t" style="top:982.79px;font-size:11px;color:#c0c0c0;font-family:'DejaVu Sans', sans-serif;left:824.3px;">201</div>
<div style="left:957px;top:982px;width:1px;height:14px;background:#8e8e8e;"></div>
<div class="t" style="top:982.79px;font-size:11px;color:#c0c0c0;font-family:'DejaVu Sans', sans-serif;left:960.3px;">251</div>
<div style="left:1093px;top:982px;width:1px;height:14px;background:#8e8e8e;"></div>
<div class="t" style="top:982.79px;font-size:11px;color:#c0c0c0;font-family:'DejaVu Sans', sans-serif;left:1096.3px;">301</div>
<div style="left:1229px;top:982px;width:1px;height:14px;background:#8e8e8e;"></div>
<div class="t" style="top:982.79px;font-size:11px;color:#c0c0c0;font-family:'DejaVu Sans', sans-serif;left:1232.3px;">351</div>
<div style="left:1364px;top:982px;width:1px;height:14px;background:#8e8e8e;"></div>
<div class="t" style="top:982.79px;font-size:11px;color:#c0c0c0;font-family:'DejaVu Sans', sans-serif;left:1367.3px;">401</div>
<div style="left:1500px;top:982px;width:1px;height:14px;background:#8e8e8e;"></div>
<div class="t" style="top:982.79px;font-size:11px;color:#c0c0c0;font-family:'DejaVu Sans', sans-serif;left:1503.3px;">451</div>
<div style="left:1636px;top:982px;width:1px;height:14px;background:#8e8e8e;"></div>
<div class="t" style="top:982.79px;font-size:11px;color:#c0c0c0;font-family:'DejaVu Sans', sans-serif;left:1639.3px;">501</div>
<div style="left:1772px;top:982px;width:1px;height:14px;background:#8e8e8e;"></div>
<div class="t" style="top:982.79px;font-size:11px;color:#c0c0c0;font-family:'DejaVu Sans', sans-serif;left:1775.3px;">551</div>
<div class="t" style="top:982.79px;font-size:11px;color:#c0c0c0;font-family:'DejaVu Sans', sans-serif;left:283px;">1</div>
<div class="t" style="top:982.79px;font-size:11px;color:#c0c0c0;font-family:'DejaVu Sans', sans-serif;left:1502px;width:400px;text-align:right;">600</div>
<div style="left:800px;top:983px;width:2px;height:13px;background:#7e9ed8;"></div>
<div style="left:281px;top:998px;width:1623px;height:9px;background:#202227;"></div>
<div style="left:281px;top:998px;width:1599px;height:9px;background:#3a4a6c;"></div>
<div style="left:282px;top:998px;width:21px;height:9px;background:#55575c;border:1px solid #86888c;box-sizing:border-box;"></div>
<div style="left:1880px;top:998px;width:21px;height:9px;background:#55575c;border:1px solid #86888c;box-sizing:border-box;"></div>
<div class="t" style="top:995.58px;font-size:8px;color:#8a8c90;font-family:'DejaVu Sans', sans-serif;left:93px;width:400px;text-align:center;">...</div>
<div class="t" style="top:995.58px;font-size:8px;color:#8a8c90;font-family:'DejaVu Sans', sans-serif;left:1690.5px;width:400px;text-align:center;">...</div>
<div style="left:280px;top:1008px;width:1624px;height:1px;background:#4a4c52;"></div>
<div style="left:283px;top:1010px;width:39px;height:39px;background:#393c44;border:1px solid #5d6066;box-sizing:border-box;"></div>
<div class="t" style="top:1024.72px;font-size:10px;color:#7a7d85;font-family:'DejaVu Sans Mono', monospace;left:102.5px;width:400px;text-align:center;">I</div>
<div style="left:325px;top:1010px;width:68px;height:18px;background:#33363d;border:1px solid #5d6066;box-sizing:border-box;"></div>
<div style="left:327px;top:1012px;width:64px;height:14px;background:#d08950;"></div>
<div class="t" style="top:1014.09px;font-size:11px;color:#4d1208;font-family:'DejaVu Sans', sans-serif;left:159px;width:400px;text-align:center;letter-spacing:0.2px;">TimeCode</div>
<div style="left:325px;top:1030px;width:68px;height:18px;background:#393c44;border:1px solid #5d6066;box-sizing:border-box;"></div>
<div class="t" style="top:1034.09px;font-size:11px;color:#bcc0ce;font-family:'DejaVu Sans', sans-serif;left:159px;width:400px;text-align:center;letter-spacing:0.2px;">Beats</div>
<div style="left:395px;top:1010px;width:200px;height:39px;background:#000;border:1px solid #55585f;box-sizing:border-box;"></div>
<div class="t" style="top:1016.84px;font-size:25.5px;color:#7ea6f5;font-family:'DejaVu Sans', sans-serif;left:294.5px;width:400px;text-align:center;">00:00:03.12</div>
<div style="left:597px;top:1010px;width:135px;height:39px;background:#000;border:1px solid #55585f;box-sizing:border-box;"></div>
<div class="t" style="top:1016.84px;font-size:25.5px;color:#7ea6f5;font-family:'DejaVu Sans', sans-serif;left:463.5px;width:400px;text-align:center;">193</div>
<div style="left:734px;top:1010px;width:39px;height:39px;background:#393c44;border:1px solid #5d6066;box-sizing:border-box;"></div>
<div style="left:775px;top:1010px;width:39px;height:39px;background:#393c44;border:1px solid #5d6066;box-sizing:border-box;"></div>
<div style="left:777px;top:1012px;width:35px;height:35px;background:#c5844b;"></div>
<div style="left:816px;top:1010px;width:39px;height:39px;background:#393c44;border:1px solid #5d6066;box-sizing:border-box;"></div>
<div style="left:857px;top:1010px;width:39px;height:39px;background:#393c44;border:1px solid #5d6066;box-sizing:border-box;"></div>
<div style="left:898px;top:1010px;width:39px;height:39px;background:#393c44;border:1px solid #5d6066;box-sizing:border-box;"></div>
<div style="left:939px;top:1010px;width:39px;height:39px;background:#393c44;border:1px solid #5d6066;box-sizing:border-box;"></div>
<svg style="left:734px;top:1010px" width="39" height="39"><path d="M13 16 V25.500 M13.500 20.700 L18.300 16.500 V25 Z M18.300 20.700 L23 16.500 V25 Z" fill="#b9bfd0" stroke="#b9bfd0" stroke-width="1"/></svg>
<svg style="left:775px;top:1010px" width="39" height="39"><path d="M15.500 16 V25.500 M19 16 V25.500" stroke="#3a0f08" stroke-width="2" fill="none"/></svg>
<svg style="left:816px;top:1010px" width="39" height="39"><path d="M13.200 20.500 L17.800 17 V24 Z" fill="#b9bfd0"/></svg>
<svg style="left:857px;top:1010px" width="39" height="39"><path d="M19.300 20.500 L14.700 17 V24 Z" fill="#b9bfd0"/></svg>
<div class="t" style="top:1022.51px;font-size:14px;color:#b9bfd0;font-family:'DejaVu Sans', sans-serif;left:716.5px;width:400px;text-align:center;">-</div>
<svg style="left:939px;top:1010px" width="39" height="39"><path d="M14.500 20.500 H23.500 M19 16 V25" stroke="#b9bfd0" stroke-width="1" fill="none"/></svg>
<div class="t" style="top:1012.99px;font-size:11px;color:#bcc0ce;font-family:'DejaVu Sans', sans-serif;left:990px;letter-spacing:0.3px;">Range Limit</div>
<div style="left:981px;top:1031px;width:43px;height:18px;background:#33363d;border:1px solid #5d6066;box-sizing:border-box;"></div>
<div style="left:983px;top:1033px;width:39px;height:14px;background:#d08950;"></div>
<div class="t" style="top:1034.99px;font-size:11px;color:#4d1208;font-family:'DejaVu Sans', sans-serif;left:802.5px;width:400px;text-align:center;letter-spacing:0.2px;">Loop</div>
<div style="left:1025px;top:1031px;width:45px;height:18px;background:#393c44;border:1px solid #5d6066;box-sizing:border-box;"></div>
<div class="t" style="top:1034.99px;font-size:11px;color:#bcc0ce;font-family:'DejaVu Sans', sans-serif;left:847.5px;width:400px;text-align:center;letter-spacing:0.2px;">Once</div>
<div style="left:280px;top:1051px;width:1624px;height:1px;background:#55585f;"></div>
<div style="left:280px;top:1052px;width:1624px;height:19px;background:#0c0a18;"></div>
<div style="left:281px;top:1052px;width:18px;height:19px;background:#38486a;"></div>
<div class="t" style="top:1055.29px;font-size:11px;color:#b9bfd0;font-family:'DejaVu Sans', sans-serif;left:90px;width:400px;text-align:center;">/</div>
<div class="t" style="top:1055.79px;font-size:11px;color:#3f5488;font-family:'DejaVu Sans', sans-serif;left:309px;letter-spacing:0.5px;font-weight:bold;">Time Path: /</div>
<div style="left:1px;top:1071px;width:1905px;height:1px;background:#55585f;"></div>
<div style="left:1px;top:1072px;width:1905px;height:1px;background:#2e3037;"></div>
<div style="left:1904px;top:31px;width:1px;height:73px;background:#55585f;"></div>
<div style="left:1904px;top:531px;width:1px;height:542px;background:#55585f;"></div>
<div style="left:1905px;top:31px;width:1px;height:1042px;background:#1b1c20;"></div>
<div style="left:1904px;top:104px;width:2px;height:425px;background:#5e5e5e;"></div>
<div style="left:1903px;top:104px;width:1px;height:48px;background:#1e1e1e;"></div>
</div></body></html>
